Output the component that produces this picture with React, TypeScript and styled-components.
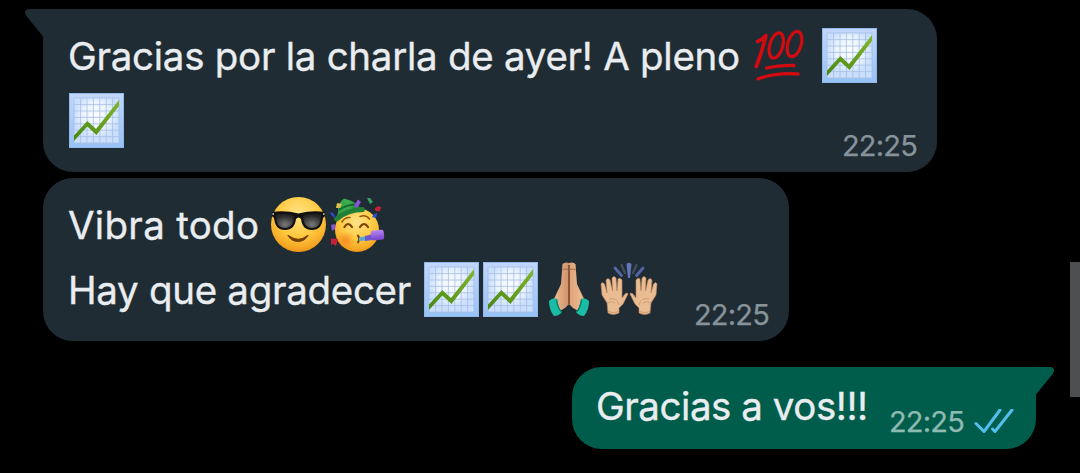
import React from 'react';
import styled, { createGlobalStyle } from 'styled-components';

const Global = createGlobalStyle`
  * { box-sizing: border-box; }
  body { margin: 0; background: #000; overflow: hidden; }
`;

const Chat = styled.main`
  display: flex;
  justify-content: space-between;
  width: 1080px;
  height: 473px;
  background: #000;
  font-family: Inter, sans-serif;
`;
const Messages = styled.section`
  display: flex;
  flex-direction: column;
  width: 1036px;
  padding: 9px 0 0 43px;
`;
const Bubble = styled.article<{ $w: number; $h: number; $out?: boolean; $first?: boolean; $gap?: number }>`
  position: relative;
  align-self: ${p => (p.$out ? 'flex-end' : 'flex-start')};
  width: ${p => p.$w}px;
  height: ${p => p.$h}px;
  margin-top: ${p => p.$gap ?? 0}px;
  padding: ${p => (p.$out ? '6px 21px 0 24px' : '14px 20px 0 25px')};
  border-radius: 30px;
  ${p => p.$first && (p.$out ? 'border-top-right-radius: 0;' : 'border-top-left-radius: 0;')}
  background: ${p => (p.$out ? '#005d4b' : '#202c33')};
`;
const Tail = styled.svg<{ $out?: boolean }>`
  position: absolute;
  top: 0;
  ${p => (p.$out ? 'right: -18px; transform: scaleX(-1);' : 'left: -18px;')}
`;
const Line = styled.div<{ $indent?: number }>`
  display: flex;
  align-items: center;
  height: 65px;
  gap: 4px;
  padding-left: ${p => p.$indent ?? 0}px;
`;
const Words = styled.span<{ $w: number; $ls?: number }>`
  width: ${p => p.$w}px;
  flex: none;
  padding-top: 2px;
  white-space: nowrap;
  font-size: 38.5px;
  line-height: 65px;
  letter-spacing: ${p => p.$ls ?? 0}px;
  -webkit-text-stroke: 0.35px currentColor;
  color: #e9edf0;
`;
const Space = styled.span`
  width: 8px;
  flex: none;
`;
const Meta = styled.footer<{ $out?: boolean }>`
  position: absolute;
  right: ${p => (p.$out ? 22 : 20)}px;
  bottom: ${p => (p.$out ? 9 : 8)}px;
  display: flex;
  align-items: center;
  gap: 10px;
  font-size: 29px;
  line-height: 36px;
  letter-spacing: -0.8px;
  -webkit-text-stroke: 0.25px currentColor;
  color: ${p => (p.$out ? '#8fbab1' : '#87939a')};
`;
const Glyph = styled.svg`
  flex: none;
  width: 55px;
  height: 55px;
  overflow: visible;
`;
const ScrollThumb = styled.div`
  width: 10px;
  height: 135px;
  margin-top: 262px;
  background: #4e4f51;
`;

const BubbleTail = ({ out }: { out?: boolean }) => (
  <Tail $out={out} width="19" height="28" viewBox="0 0 19 28">
    <path d="M19 0H4C0 0-1 3 1 6.500L18 27.500H19Z" fill={out ? '#005d4b' : '#202c33'} />
  </Tail>
);

const gridX = [5, 11.600, 18, 24.400, 30.800, 37.200, 43.600, 50];
const Chart = () => (
  <Glyph viewBox="0 0 55 55">
    <defs>
      <linearGradient id="frame" x2="0" y2="1">
        <stop stopColor="#c3d6fb" /><stop offset="1" stopColor="#96c2f5" />
      </linearGradient>
      <radialGradient id="paper" cy=".4">
        <stop stopColor="#fbfdff" /><stop offset=".6" stopColor="#ebf4ff" /><stop offset="1" stopColor="#c9dffd" />
      </radialGradient>
      <linearGradient id="rise" x1="1" y1="0" x2="0" y2="1">
        <stop stopColor="#80b62c" /><stop offset="1" stopColor="#4a8714" />
      </linearGradient>
    </defs>
    <rect width="55" height="55" fill="url(#frame)" />
    <rect x=".5" y=".5" width="54" height="54" fill="none" stroke="#92b9ea" />
    <rect x="5" y="5" width="45" height="45" fill="url(#paper)" />
    {gridX.map(v => <path key={v} d={`M${v} 5V50M5 ${v}H50`} stroke="#a8bee3" strokeWidth=".8" />)}
    <path d="M5 42.500L18.300 28L27 36L50 7V13L27.500 42L18.300 33.500L5 48Z" fill="url(#rise)" />
  </Glyph>
);

const Hundred = () => (
  <Glyph viewBox="0 0 55 55" fill="none" stroke="#d30b10" strokeLinecap="round" strokeLinejoin="round">
    <path d="M6.500 13.500Q11.500 11.500 15 7.500Q11 24 5.300 38.500" strokeWidth="3.600" />
    <ellipse cx="25.300" cy="17.500" rx="6.500" ry="13" transform="rotate(16 25.300 17.500)" strokeWidth="3.200" />
    <ellipse cx="43.500" cy="16" rx="6.700" ry="13" transform="rotate(16 43.500 16)" strokeWidth="3.200" />
    <path d="M15.500 40Q28 37 43 37.500M7 51Q24 44.500 47 46" strokeWidth="3.300" />
  </Glyph>
);

const FaceFill = () => (
  <radialGradient id="face" cx=".5" cy=".32" r=".72">
    <stop stopColor="#ffe48a" /><stop offset=".55" stopColor="#ffc93f" /><stop offset=".85" stopColor="#f5a623" /><stop offset="1" stopColor="#e8890f" />
  </radialGradient>
);

const Cool = () => (
  <Glyph viewBox="0 0 55 55">
    <defs>
      <FaceFill />
      <radialGradient id="lens" cx=".5" cy=".75" r=".65">
        <stop stopColor="#7a7a7a" /><stop offset="1" stopColor="#252525" />
      </radialGradient>
    </defs>
    <circle cx="27.500" cy="27.500" r="27.500" fill="url(#face)" />
    <path d="M1 15Q14 13 27.500 16.500Q41 13 54 15V19L52 21C51 29 48 33 41 33C34 33 31 29 30 22Q27.500 19 25 22C24 29 21 33 14 33C7 33 4 29 3 21L1 19Z" fill="#111" />
    <path d="M5 18Q14 15.500 23 19C23 26 20 31 14 31C8 31 5 27 5 18Z" fill="url(#lens)" />
    <path d="M50 18Q41 15.500 32 19C32 26 35 31 41 31C47 31 50 27 50 18Z" fill="url(#lens)" />
    <path d="M1.500 17H3M52 17H53.500" stroke="#ddd" strokeWidth="1.600" />
    <path d="M17 38.500Q27.500 46 37 38.500Q33 44.500 27 44.500Q21 44.500 17 38.500Z" fill="#704008" stroke="#704008" strokeWidth="1.200" strokeLinejoin="round" />
  </Glyph>
);

const Party = () => (
  <Glyph viewBox="0 0 55 55">
    <defs>
      <linearGradient id="hat"><stop stopColor="#2c9b42" /><stop offset=".5" stopColor="#3fae50" /><stop offset="1" stopColor="#13662c" /></linearGradient>
      <linearGradient id="horn" x2="0" y2="1"><stop stopColor="#b987f5" /><stop offset="1" stopColor="#7542ca" /></linearGradient>
      <radialGradient id="blush"><stop stopColor="#f2711c" stopOpacity=".6" /><stop offset="1" stopColor="#f2711c" stopOpacity="0" /></radialGradient>
    </defs>
    <circle cx="27" cy="33" r="22" fill="url(#face)" />
    <circle cx="16" cy="43" r="9" fill="url(#blush)" />
    <path d="M5 22Q9 16 8 12Q9 5 14 1.500Q28 5 32 13Q18 13 5 22Z" fill="url(#hat)" />
    <path d="M4 21Q16 10 33 10Q36 12 34 15Q18 15 8 24Q4 25 4 21Z" fill="#237f37" />
    <path d="M9 13Q18 7 27 8" fill="none" stroke="#176b30" strokeWidth="2" />
    <path d="M14.500 30Q18 24 22 30M30 30Q34 24 38 30" fill="none" stroke="#774108" strokeWidth="2.200" strokeLinecap="round" />
    <path d="M12 25Q15 20 20 20.500M30 19.500Q36 17 39.500 22" fill="none" stroke="#99560c" strokeWidth="1.500" strokeLinecap="round" />
    <path d="M27.500 38Q31 42 27.500 46" fill="none" stroke="#774108" strokeWidth="2" />
    <path d="M29 40.500L36 39V43.500L29 44Z" fill="#58a9cc" />
    <path d="M35 39L43 37V43L35 44Z" fill="#6d57cf" />
    <rect x="41" y="33" width="13" height="10" rx="2.500" fill="url(#horn)" transform="rotate(-5 48 38)" />
    <path d="M28 2.500L31 5L27 11L24 9ZM1 28L5 27V32L2 34Z" fill="#8b52db" />
    <path d="M7 6L12 7L10 11L6 11Z" fill="#dfc04b" />
    <path d="M37 1L40 1L43 5L40 7Z" fill="#35a361" />
    <path d="M44.500 12Q47 8 51 10L50 14L46 14ZM1 41.500L8 42L6 49L3 47L1 48Z" fill="#c51f3a" />
    <path d="M0 15L3 16L6 21L2 19ZM44 17L47.500 16L46 21L42 20Z" fill="#304bd6" />
  </Glyph>
);

const Pray = () => (
  <Glyph viewBox="0 0 55 55">
    <defs>
      <linearGradient id="skin"><stop stopColor="#edbd91" /><stop offset=".48" stopColor="#cf946c" /><stop offset=".54" stopColor="#dda47b" /><stop offset="1" stopColor="#f0be93" /></linearGradient>
    </defs>
    <path d="M20.500 2Q23-.5 27 1Q31-.5 33.500 2L35 22L43 39L38 50L31 46L27 42L23 46L16 50L11 39L19 22Z" fill="url(#skin)" />
    <path d="M27 3V42" fill="none" stroke="#7c432c" strokeWidth="1.600" />
    <path d="M21 8Q24 6 26.500 8M33.500 8Q30 6 27.500 8" fill="none" stroke="#a16c4d" strokeWidth="1.200" />
    <path d="M7 39Q11 35 15 37Q16 46 20 50Q17 54 12 54Q7 48 7 39ZM47 39Q43 35 39 37Q38 46 34 50Q37 54 42 54Q47 48 47 39Z" fill="#1bbca4" />
    <path d="M14.500 37.500Q15.500 46 19.500 50M39.500 37.500Q38.500 46 34.500 50" fill="none" stroke="#0b7f6e" strokeWidth="1.500" />
  </Glyph>
);

const RaisedHand = () => (
  <>
    <path d="M7 51L6 41L1 33L0 22Q1 19 3.500 22L6 31L5 18Q7 15 9 18L11.500 29L11 16Q13 13 15 16L16 29L17 17Q19 15 21 18L21 36L24 32Q27 30 27 32L22 42L18 46L18 51Q12 54 7 51Z" fill="#e9bc92" stroke="#bd835f" strokeWidth=".6" />
    <path d="M8 37Q16 35 18 43M6 41Q11 38 14 41M7 49.500Q12 52 18 49.500" fill="none" stroke="#cf9b73" strokeWidth=".9" />
  </>
);
const Praise = () => (
  <Glyph viewBox="0 0 55 55">
    <RaisedHand />
    <g transform="translate(56 0) scale(-1 1)"><RaisedHand /></g>
    <path d="M25.500 2Q28-.5 30.500 2L29 16H27Z" fill="#6576bd" />
    <path d="M14 6L20.500 13.500M42 6L35.500 13.500" stroke="#5565a8" strokeWidth="2.800" strokeLinecap="round" />
    <path d="M20.500 3L24 11M35.500 3L32 11" stroke="#3f4f60" strokeWidth="2.300" strokeLinecap="round" />
  </Glyph>
);

const ReadTicks = () => (
  <svg width="40" height="26" viewBox="0 0 40 26" fill="none" stroke="#53bdeb" strokeWidth="3" strokeLinecap="round" strokeLinejoin="round">
    <path d="M2 14.500L10 22.500L26 1M18.500 20L21 22.500L38 1" />
  </svg>
);

export default function App() {
  return (
    <>
      <Global />
      <Chat>
        <Messages>
          <Bubble $w={894} $h={163} $first>
            <BubbleTail />
            <Line><Words $w={679} $ls={-0.27}>Gracias por la charla de ayer! A pleno</Words><Hundred /><Space /><Chart /></Line>
            <Line $indent={1}><Chart /></Line>
            <Meta>22:25</Meta>
          </Bubble>
          <Bubble $w={746} $h={163} $gap={6}>
            <Line><Words $w={199} $ls={0.3}>Vibra todo</Words><Cool /><Party /></Line>
            <Line><Words $w={352} $ls={-0.3}>Hay que agradecer</Words><Chart /><Chart /><Pray /><Praise /></Line>
            <Meta>22:25</Meta>
          </Bubble>
          <Bubble $w={464} $h={82} $gap={26} $out $first>
            <BubbleTail out />
            <Line><Words $w={280} $ls={-0.45}>Gracias a vos!!!</Words></Line>
            <Meta $out>22:25 <ReadTicks /></Meta>
          </Bubble>
        </Messages>
        <ScrollThumb />
      </Chat>
    </>
  );
}
